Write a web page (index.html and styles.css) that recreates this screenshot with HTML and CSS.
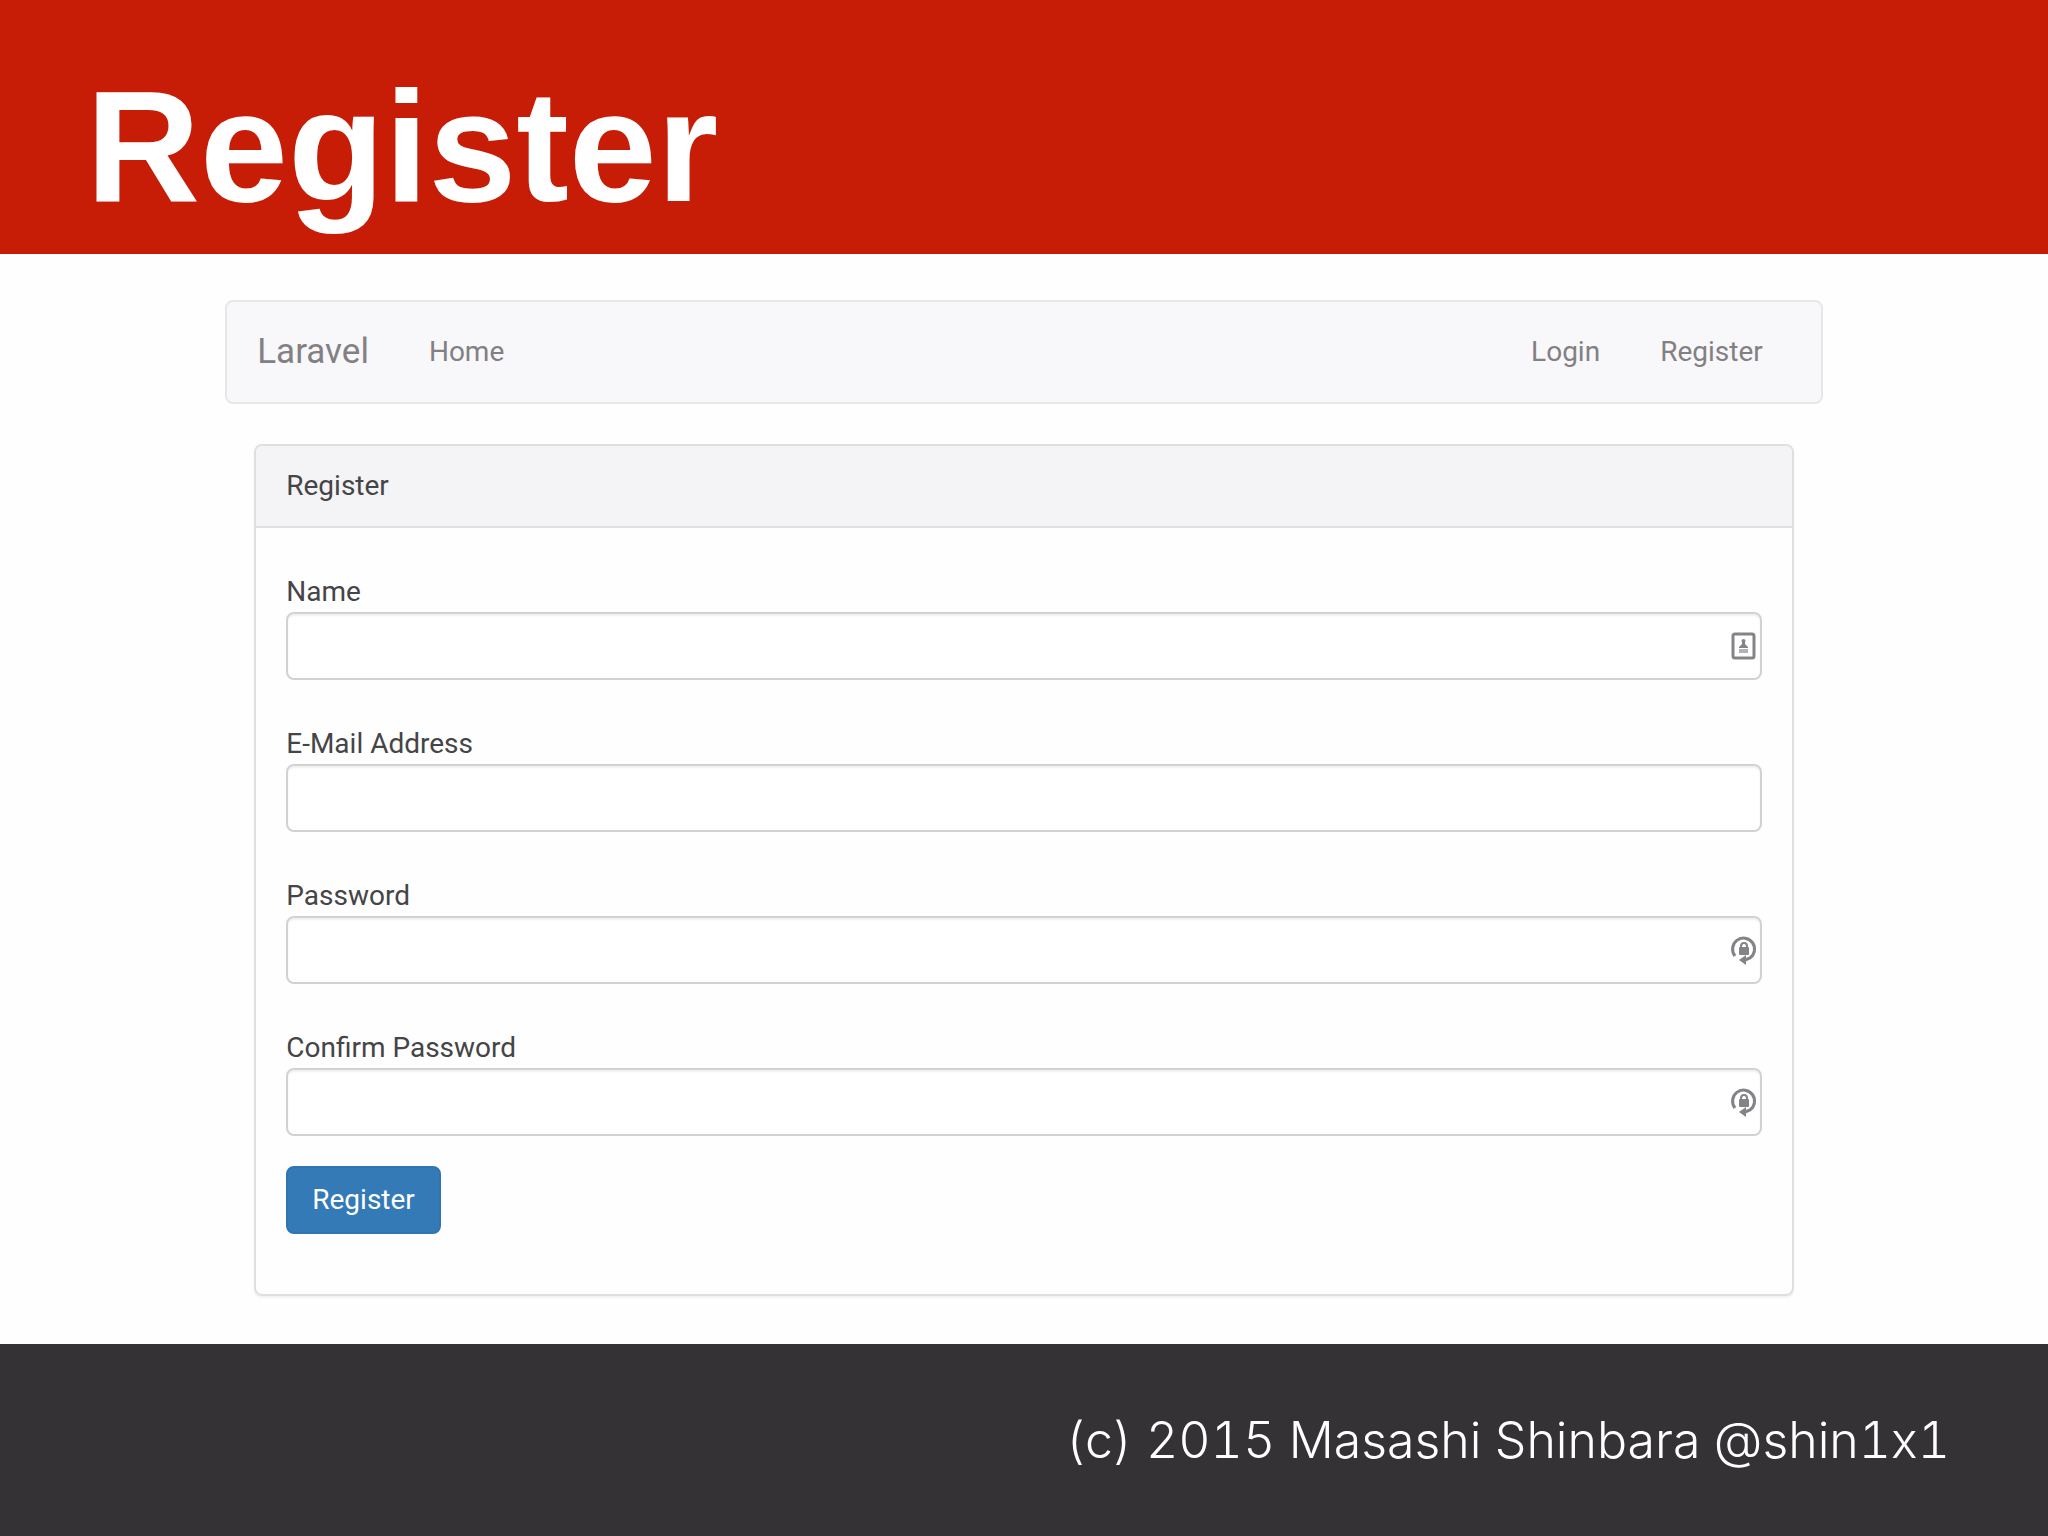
FILE: index.html
```html
<!DOCTYPE html>
<html lang="en">

<head>
	<meta charset="UTF-8" />
	<meta name="viewport" content="width=device-width, initial-scale=1.0" />
	<title>Register</title>
	<link rel="stylesheet" href="styles.css">
</head>

<body>
	<header class="slide-header">
		<h1>Register</h1>
	</header>
	<main class="content">
		<nav class="navbar">
			<a class="navbar-brand" href="#">Laravel</a>
			<a class="nav-link" href="#">Home</a>
			<div class="navbar-right">
				<a class="nav-link" href="#">Login</a>
				<a class="nav-link" href="#">Register</a>
			</div>
		</nav>
		<section class="panel">
			<h2 class="panel-heading">Register</h2>
			<form class="panel-body">
				<div class="form-group">
					<label for="name">Name</label>
					<div class="field">
						<input type="text" id="name" name="name" />
						<svg class="field-icon" viewBox="0 0 26 28">
							<rect x="2" y="2" width="21" height="24" rx="2" fill="none" stroke="#858387" stroke-width="3" />
							<circle cx="12.5" cy="9" r="2" fill="#858387" />
							<path d="M11 10h3v2l3 3v1H8v-1l3-3z" fill="#858387" />
							<path d="M8 19h9" stroke="#b3b1b5" stroke-width="4" />
						</svg>
					</div>
				</div>
				<div class="form-group">
					<label for="email">E-Mail Address</label>
					<div class="field">
						<input type="email" id="email" name="email" />
					</div>
				</div>
				<div class="form-group">
					<label for="password">Password</label>
					<div class="field">
						<input type="password" id="password" name="password" />
						<svg class="field-icon" viewBox="0 0 26 28">
							<path d="M4 20A11 11 0 1 1 19 22L14 24" fill="none" stroke="#858387" stroke-width="3" />
							<path d="M8 24l7-5v10z" fill="#858387" />
							<rect x="8" y="11" width="10" height="8" rx="1" fill="#858387" />
							<path d="M10 12v-2a3 3 0 0 1 6 0v2" fill="none" stroke="#858387" stroke-width="2" />
						</svg>
					</div>
				</div>
				<div class="form-group">
					<label for="confirm">Confirm Password</label>
					<div class="field">
						<input type="password" id="confirm" name="confirm" />
						<svg class="field-icon" viewBox="0 0 26 28">
							<path d="M4 20A11 11 0 1 1 19 22L14 24" fill="none" stroke="#858387" stroke-width="3" />
							<path d="M8 24l7-5v10z" fill="#858387" />
							<rect x="8" y="11" width="10" height="8" rx="1" fill="#858387" />
							<path d="M10 12v-2a3 3 0 0 1 6 0v2" fill="none" stroke="#858387" stroke-width="2" />
						</svg>
					</div>
				</div>
				<button type="submit" class="btn">Register</button>
			</form>
		</section>
	</main>
	<footer class="slide-footer">(c) 2015 Masashi Shinbara @shin1x1</footer>
</body>

</html>
```

FILE: styles.css
```css
* {
	box-sizing: border-box;
}

body {
	margin: 0;
	min-height: 100vh;
	display: flex;
	flex-direction: column;
	background-color: #fefefe;
	color: #454446;
	font-family: Roboto, sans-serif;
	font-size: 28px;
	line-height: 40px;
}

.slide-header {
	padding: 66px 86px 28px;
	background-color: #c71d06;
	color: #fff;
}

.slide-header h1 {
	margin: 0;
	font-family: "Liberation Sans", sans-serif;
	font-size: 158px;
	font-weight: 700;
	line-height: 160px;
}

.content {
	flex: 1;
	padding: 46px 11%;
}

.navbar {
	display: flex;
	align-items: center;
	height: 104px;
	margin-bottom: 40px;
	border: 2px solid #e8e6e9;
	border-radius: 8px;
	background-color: #f8f7f9;
}

.navbar a {
	padding: 0 30px;
	color: #828083;
	text-decoration: none;
}

.navbar .navbar-brand {
	font-size: 35px;
}

.navbar-right {
	display: flex;
	margin-left: auto;
	margin-right: 28px;
}

.panel {
	margin: 0 29px;
	border: 2px solid #e0dee1;
	border-radius: 8px;
	box-shadow: 0 2px 2px rgba(0, 0, 0, 0.05);
}

.panel-heading {
	margin: 0;
	padding: 20px 30px;
	border-bottom: 2px solid #e0dee1;
	border-radius: 6px 6px 0 0;
	background-color: #f4f3f5;
	font-size: 28px;
	font-weight: 400;
}

.panel-body {
	padding: 44px 30px 60px;
}

.form-group {
	margin-bottom: 44px;
}

.form-group:last-of-type {
	margin-bottom: 30px;
}

label {
	display: block;
}

.field {
	position: relative;
}

.field input {
	display: block;
	width: 100%;
	height: 68px;
	padding: 12px 40px 12px 24px;
	border: 2px solid #d3d1d4;
	border-radius: 8px;
	background-color: #fff;
	box-shadow: inset 0 2px 2px rgba(0, 0, 0, 0.06);
	font: inherit;
}

/* sits over the right end of the input */
.field-icon {
	position: absolute;
	top: 20px;
	right: 5px;
	width: 26px;
	height: 28px;
	overflow: visible;
}

.btn {
	display: block;
	padding: 12px 24px;
	border: 2px solid #3175b0;
	border-radius: 8px;
	background-color: #337ab7;
	color: #fff;
	font: inherit;
}

.slide-footer {
	padding: 66px 98px;
	background-color: #343235;
	color: #fff;
	font-family: Inter, sans-serif;
	font-variant-ligatures: no-contextual;
	font-variant-numeric: tabular-nums;
	font-size: 50px;
	font-weight: 300;
	line-height: 60px;
	text-align: right;
}
```
